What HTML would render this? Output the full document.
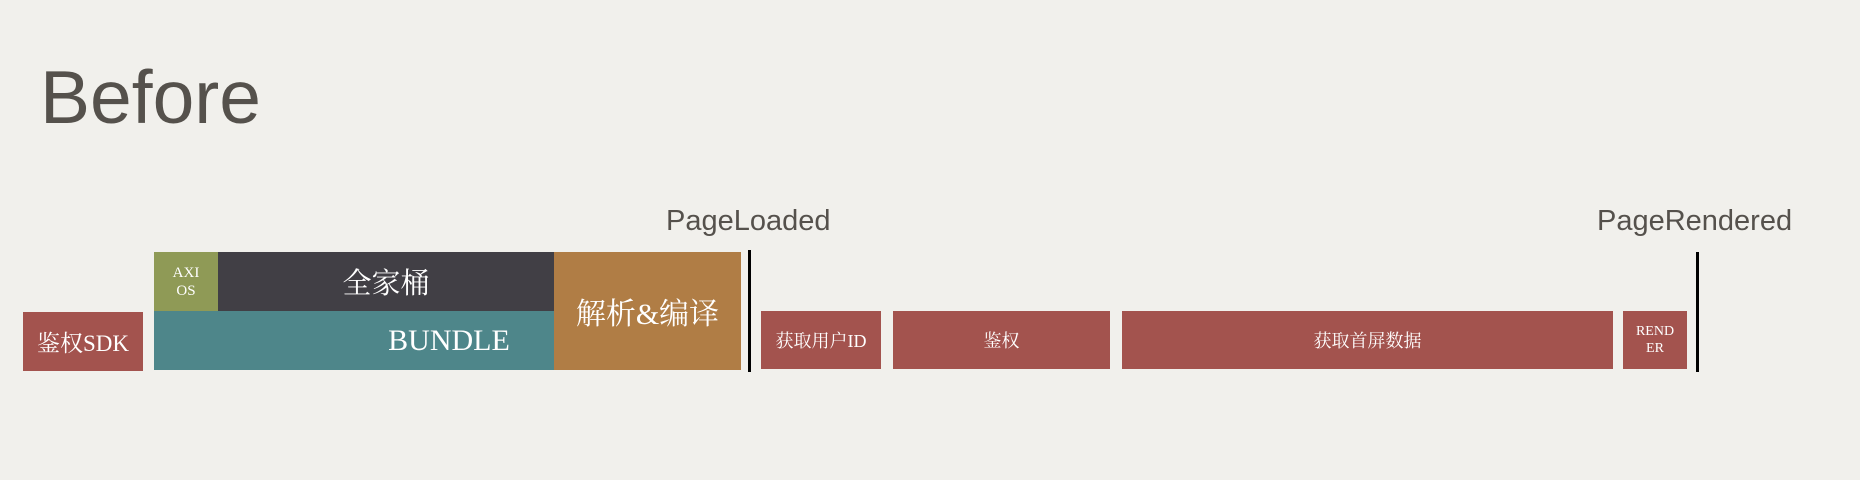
<!DOCTYPE html>
<html><head><meta charset="utf-8"><style>
html,body{margin:0;padding:0}
body{width:1860px;height:480px;background:#f1f0ec;position:relative;overflow:hidden;font-family:"Liberation Serif","Noto Serif CJK SC",serif}
.b{position:absolute;color:#fff;display:flex;align-items:center;justify-content:center;text-align:center;box-sizing:border-box}
.t{position:absolute;font-family:"Liberation Sans","DejaVu Sans",sans-serif;color:#55514c}
.l{position:absolute;background:#000;width:3px}
</style></head><body>
<div class="t" style="left:40px;top:57px;font-size:75px;line-height:80px">Before</div>
<div class="t" style="left:666px;top:204px;font-size:29px;line-height:34px">PageLoaded</div>
<div class="t" style="left:1597px;top:204px;font-size:29px;line-height:34px">PageRendered</div>

<div class="b" style="left:23px;top:312px;width:120px;height:59px;background:#a3534e;font-size:23px">鉴权SDK</div>
<div class="b" style="left:154px;top:252px;width:64px;height:59px;background:#8f9a56;font-size:15px;line-height:18px">AXI<br>OS</div>
<div class="b" style="left:218px;top:252px;width:336px;height:59px;background:#413f45;font-size:29px">全家桶</div>
<div class="b" style="left:154px;top:311px;width:400px;height:59px;background:#4e868a;font-size:30px;padding-left:190px">BUNDLE</div>
<div class="b" style="left:554px;top:252px;width:187px;height:118px;background:#b07d45;font-size:30px">解析&amp;编译</div>
<div class="l" style="left:748px;top:250px;height:122px"></div>

<div class="b" style="left:761px;top:311px;width:120px;height:58px;background:#a3534e;font-size:18px">获取用户ID</div>
<div class="b" style="left:893px;top:311px;width:217px;height:58px;background:#a3534e;font-size:18px">鉴权</div>
<div class="b" style="left:1122px;top:311px;width:491px;height:58px;background:#a3534e;font-size:18px">获取首屏数据</div>
<div class="b" style="left:1623px;top:311px;width:64px;height:58px;background:#a3534e;font-size:14px;line-height:17px">REND<br>ER</div>
<div class="l" style="left:1696px;top:252px;height:120px"></div>
</body></html>
